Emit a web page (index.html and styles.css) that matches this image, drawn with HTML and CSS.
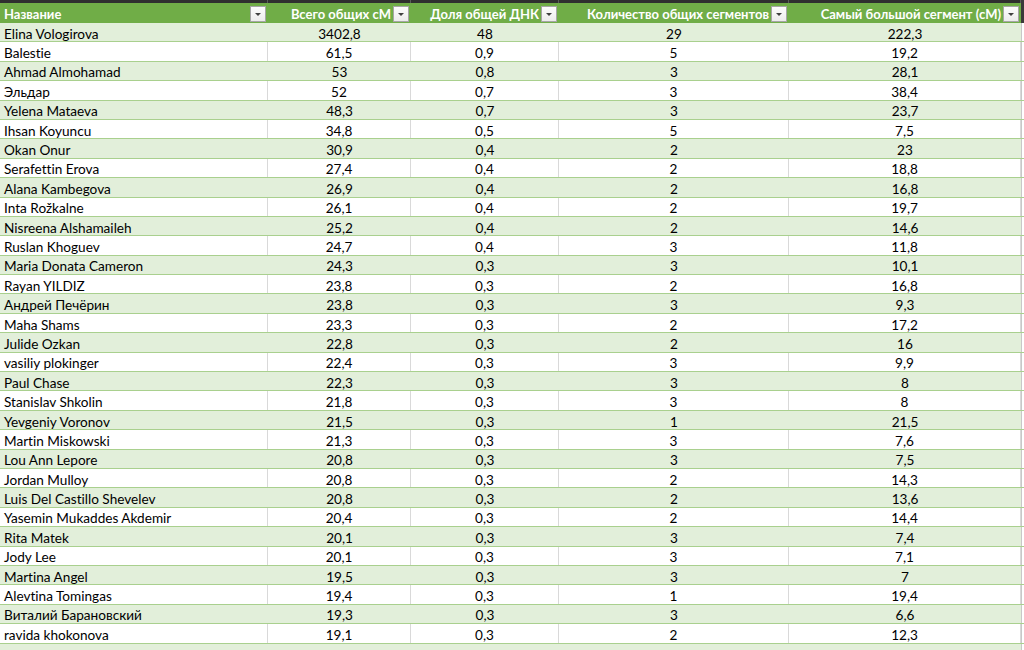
FILE: index.html
```html
<!DOCTYPE html>
<html lang="ru">
<head>
<meta charset="utf-8">
<title>DNA matches</title>
<link rel="stylesheet" href="styles.css">
</head>
<body>
<div class="sheet">
  <div class="topbar">
    <div class="tb"></div><div class="tb"></div><div class="tb"></div><div class="tb"></div><div class="tb"></div><div class="tb edge"></div>
  </div>
  <div class="row head">
    <div class="hc left"><span class="ht">Название</span><span class="dd"></span></div>
    <div class="hc"><span class="ht">Всего общих сМ</span><span class="dd"></span></div>
    <div class="hc"><span class="ht">Доля общей ДНК</span><span class="dd"></span></div>
    <div class="hc"><span class="ht">Количество общих сегментов</span><span class="dd"></span></div>
    <div class="hc"><span class="ht">Самый большой сегмент (сМ)</span><span class="dd"></span></div>
    <div class="hc edge"></div>
  </div>
  <div id="rows"></div>
</div>
<script src="app.js"></script>
</body>
</html>
```
FILE: app.js
```js
const data = [
["Elina Vologirova","3402,8","48","29","222,3"],
["Balestie","61,5","0,9","5","19,2"],
["Ahmad Almohamad","53","0,8","3","28,1"],
["Эльдар","52","0,7","3","38,4"],
["Yelena Mataeva","48,3","0,7","3","23,7"],
["Ihsan Koyuncu","34,8","0,5","5","7,5"],
["Okan Onur","30,9","0,4","2","23"],
["Serafettin Erova","27,4","0,4","2","18,8"],
["Alana Kambegova","26,9","0,4","2","16,8"],
["Inta Rožkalne","26,1","0,4","2","19,7"],
["Nisreena Alshamaileh","25,2","0,4","2","14,6"],
["Ruslan Khoguev","24,7","0,4","3","11,8"],
["Maria Donata Cameron","24,3","0,3","3","10,1"],
["Rayan YILDIZ","23,8","0,3","2","16,8"],
["Андрей Печёрин","23,8","0,3","3","9,3"],
["Maha Shams","23,3","0,3","2","17,2"],
["Julide Ozkan","22,8","0,3","2","16"],
["vasiliy plokinger","22,4","0,3","3","9,9"],
["Paul Chase","22,3","0,3","3","8"],
["Stanislav Shkolin","21,8","0,3","3","8"],
["Yevgeniy Voronov","21,5","0,3","1","21,5"],
["Martin Miskowski","21,3","0,3","3","7,6"],
["Lou Ann Lepore","20,8","0,3","3","7,5"],
["Jordan Mulloy","20,8","0,3","2","14,3"],
["Luis Del Castillo Shevelev","20,8","0,3","2","13,6"],
["Yasemin Mukaddes Akdemir","20,4","0,3","2","14,4"],
["Rita Matek","20,1","0,3","3","7,4"],
["Jody Lee","20,1","0,3","3","7,1"],
["Martina Angel","19,5","0,3","3","7"],
["Alevtina Tomingas","19,4","0,3","1","19,4"],
["Виталий Барановский","19,3","0,3","3","6,6"],
["ravida khokonova","19,1","0,3","2","12,3"],
["","","","",""]
];
const rows = document.getElementById("rows");
data.forEach((r, i) => {
  const row = document.createElement("div");
  row.className = "row body " + (i % 2 === 0 ? "band" : "plain");
  r.forEach((v, j) => {
    const c = document.createElement("div");
    c.className = "c" + (j === 0 ? " left" : "");
    c.textContent = v;
    row.appendChild(c);
  });
  const e = document.createElement("div");
  e.className = "c edge";
  row.appendChild(e);
  rows.appendChild(row);
});
```
FILE: styles.css
```css
html, body {
  margin: 0;
  padding: 0;
  background: #ffffff;
  overflow: hidden;
}
body {
  font-family: Lato, "Open Sans", "Noto Sans", sans-serif;
  font-size: 13.6px;
  font-variant-ligatures: none;
  color: #000;
}
.sheet {
  width: 1024px;
  height: 650px;
  overflow: hidden;
  display: flex;
  flex-direction: column;
}
.topbar, .row {
  display: grid;
  grid-template-columns: 268px 143px 148px 230px 232px 3px;
  flex: none;
}
.topbar {
  height: 3px;
  background: #2f2f2f;
}
.tb {
  border-right: 1px solid #5a5a5a;
}
.tb.edge { border-right: none; background: #3a3a3a; }
.head {
  height: 20px;
  background: #70ad47;
}
.hc {
  display: flex;
  align-items: center;
  justify-content: flex-end;
  padding-right: 2px;
  color: #fff;
  font-weight: 700;
  font-size: 13px;
}
.hc.left {
  justify-content: space-between;
  padding-left: 4px;
}
.hc.edge { background: #3a3a3a; padding: 0; }
.ht {
  margin-right: 2px;
  padding-top: 1px;
  white-space: nowrap;
}
.dd {
  position: relative;
  width: 14px;
  height: 14px;
  margin-top: 3px;
  margin-bottom: 1px;
  background: linear-gradient(#fdfdfd, #ececec);
  border: 1px solid #a6a6a6;
  flex: none;
}
.dd::after {
  content: "";
  position: absolute;
  left: 4px;
  top: 6px;
  border-left: 3px solid transparent;
  border-right: 3px solid transparent;
  border-top: 3px solid #404040;
}
.body {
  height: 19.4px;
  box-sizing: border-box;
  border-bottom: 1px solid #a9d08e;
}
.band { background: #e2efda; }
.plain { background: #fff; }
.c {
  display: flex;
  align-items: center;
  justify-content: center;
  padding-top: 3px;
  box-sizing: border-box;
  white-space: nowrap;
  overflow: hidden;
}
.plain .c { border-right: 1px solid #d9d9d9; }
.plain .c.edge { border-right: none; }
.c.left {
  justify-content: flex-start;
  padding-left: 4px;
}
.c.edge { background: #ffffff; border-left: 1px solid #c8c8c8; }
```
